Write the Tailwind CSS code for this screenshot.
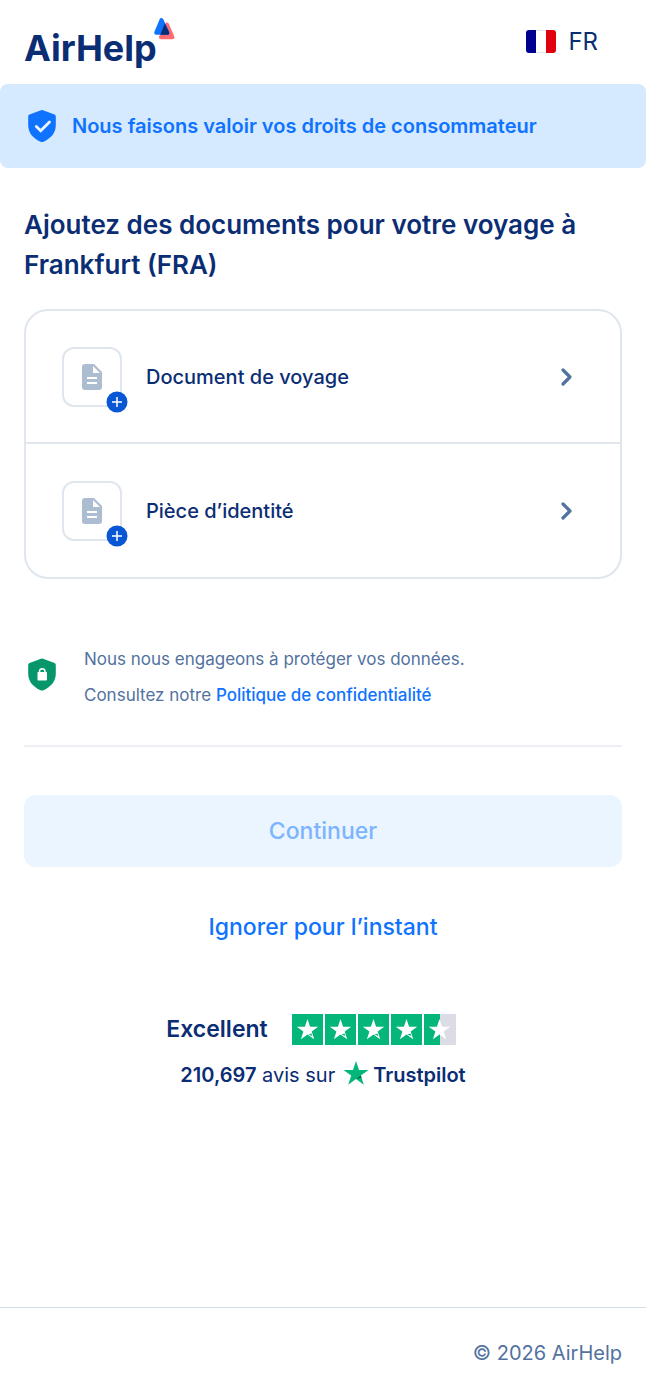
<!DOCTYPE html>
<html lang="fr">
<head>
    <meta charset="UTF-8">
    <meta name="viewport" content="width=device-width, initial-scale=1.0">
    <title>AirHelp - Ajoutez des documents</title>
    <script src="https://cdn.jsdelivr.net/npm/@tailwindcss/browser@4"></script>
</head>
<body class="min-h-screen flex flex-col bg-white text-[#0a2d74] font-['Inter',sans-serif]">
    <header class="h-[84px] pl-6 pr-12 flex items-center justify-between">
        <a href="#" class="flex items-start pt-3" aria-label="AirHelp">
            <span class="text-[36px] leading-[46px] font-bold">AirHelp</span>
            <svg class="w-6 h-6 -ml-1 -mt-2" viewBox="0 0 24 24" aria-hidden="true">
                <path d="M14 7.500l5.500 12.700H8z" fill="#ff6b70" stroke="#ff6b70" stroke-width="4" stroke-linejoin="round"/>
                <path d="M8.500 3l5.900 12.700H3.200z" fill="#0f73ff" stroke="#0f73ff" stroke-width="4" stroke-linejoin="round"/>
                <path d="M11.800 6.500l4.500 9.200q.5 2-1.500 2H7.300z" fill="#0a2d74"/>
            </svg>
        </a>
        <button class="flex items-center gap-3 text-2xl">
            <svg class="w-[30px] h-6" viewBox="0 0 30 24" aria-hidden="true">
                <rect x=".5" y=".5" width="29" height="22" rx="3" fill="#fff" stroke="#e3e8f0"/>
                <path d="M3 0h7v23H3q-3 0-3-3V3q0-3 3-3z" fill="#00008f"/>
                <path d="M20 0h7q3 0 3 3v17q0 3-3 3h-7z" fill="#e1000f"/>
            </svg>
            FR
        </button>
    </header>

    <div class="h-[84px] px-6 flex items-center gap-3 rounded-lg bg-[#d5e9ff] text-[#0f73ff]">
        <svg class="w-9 h-9 shrink-0" viewBox="0 0 36 36" aria-hidden="true">
            <path d="M17 2.300q1-.5 2 0l11.500 4.300q1.300.5 1.300 2V17c0 8-5 13.500-12.300 16.700q-1.500.6-3 0C9.200 30.500 4.200 25 4.200 17V8.600q0-1.500 1.300-2z" fill="#0f73ff"/>
            <path d="M12.300 18.500l4.400 4.200 8.800-8.800" fill="none" stroke="#eaf5ff" stroke-width="2.800" stroke-linecap="round"/>
        </svg>
        <p class="text-xl font-semibold">Nous faisons valoir vos droits de consommateur</p>
    </div>

    <main class="px-6 pt-[37px] flex flex-col">
        <h1 class="text-[26px] leading-10 font-semibold">Ajoutez des documents pour votre voyage à Frankfurt (FRA)</h1>

        <!-- Documents -->
        <div class="mt-6 border-2 border-[#dfe6ee] rounded-3xl divide-y-2 divide-[#dfe6ee]">
            <button class="w-full h-[133px] pl-9 pr-[42px] flex items-center text-left">
                <span class="relative w-[60px] h-[60px] border-2 border-[#dfe6ee] rounded-xl flex items-center justify-center">
                    <svg class="w-8 h-8" viewBox="0 0 32 32" aria-hidden="true">
                        <path d="M8 3h10l8 8v15q0 3-3 3H9q-3 0-3-3V6q0-3 3-3zM17 5v7h7z" fill="#adbdd1" fill-rule="evenodd"/>
                        <path d="M11 17h10M11 22h10" stroke="#fff" stroke-width="2"/>
                    </svg>
                    <svg class="absolute -right-2 -bottom-2 w-[22px] h-[22px]" viewBox="0 0 22 22" aria-hidden="true">
                        <circle cx="11" cy="11" r="10.500" fill="#0a57d6"/>
                        <path d="M11 6v10M6 11h10" stroke="#fff" stroke-width="1.500"/>
                    </svg>
                </span>
                <span class="ml-6 flex-1 text-xl font-medium">Document de voyage</span>
                <svg class="w-6 h-6" viewBox="0 0 24 24" fill="none" stroke="#5272a0" stroke-width="3.200" stroke-linecap="round" stroke-linejoin="round" aria-hidden="true"><path d="M9 5l7 7-7 7"/></svg>
            </button>
            <button class="w-full h-[133px] pl-9 pr-[42px] flex items-center text-left">
                <span class="relative w-[60px] h-[60px] border-2 border-[#dfe6ee] rounded-xl flex items-center justify-center">
                    <svg class="w-8 h-8" viewBox="0 0 32 32" aria-hidden="true">
                        <path d="M8 3h10l8 8v15q0 3-3 3H9q-3 0-3-3V6q0-3 3-3zM17 5v7h7z" fill="#adbdd1" fill-rule="evenodd"/>
                        <path d="M11 17h10M11 22h10" stroke="#fff" stroke-width="2"/>
                    </svg>
                    <svg class="absolute -right-2 -bottom-2 w-[22px] h-[22px]" viewBox="0 0 22 22" aria-hidden="true">
                        <circle cx="11" cy="11" r="10.500" fill="#0a57d6"/>
                        <path d="M11 6v10M6 11h10" stroke="#fff" stroke-width="1.500"/>
                    </svg>
                </span>
                <span class="ml-6 flex-1 text-xl font-medium">Pièce d’identité</span>
                <svg class="w-6 h-6" viewBox="0 0 24 24" fill="none" stroke="#5272a0" stroke-width="3.200" stroke-linecap="round" stroke-linejoin="round" aria-hidden="true"><path d="M9 5l7 7-7 7"/></svg>
            </button>
        </div>

        <!-- Privacy -->
        <div class="mt-[62px] pb-8 flex items-start gap-6 border-b-2 border-[#edf1f5]">
            <svg class="w-9 h-9 mt-4 shrink-0" viewBox="0 0 36 36" aria-hidden="true">
                <path d="M17 1.800q1-.5 2 0l11.500 4.300q1.300.5 1.300 2v8.400c0 8-5 13.500-12.300 16.700q-1.500.6-3 0C9.200 30 4.200 24.500 4.200 16.500V8.100q0-1.500 1.300-2z" fill="#05966b"/>
                <rect x="13.500" y="15" width="9.500" height="8.500" rx=".8" fill="#fff"/>
                <path d="M15.500 16v-1.500a2.700 2.700 0 0 1 5.500 0V16" fill="none" stroke="#fff" stroke-width="1.500"/>
            </svg>
            <div class="text-[17px] leading-9 text-[#5272a0]">
                <p>Nous nous engageons à protéger vos données.</p>
                <p>Consultez notre <a href="#" class="font-medium text-[#0f73ff]">Politique de confidentialité</a></p>
            </div>
        </div>

        <button disabled class="mt-12 h-[72px] rounded-xl bg-[#eaf5ff] text-[#7db4ff] text-[23px] font-medium">Continuer</button>
        <button class="mt-6 h-[72px] text-[#0f73ff] text-[23px] font-medium">Ignorer pour l’instant</button>

        <!-- Trustpilot -->
        <div class="mt-[50px] pr-6 flex items-center justify-center gap-6">
            <span class="text-[23px] leading-8 font-semibold">Excellent</span>
            <svg class="w-[164px] h-[31px]" viewBox="0 0 164 31" role="img" aria-label="4,5 étoiles sur 5">
                <defs>
                    <path id="star" d="M15.500 5l2.600 7.700h8.100l-6.500 4.800 2.500 7.700-6.700-4.700-6.600 4.700 2.500-7.700-6.600-4.800h8.100z"/>
                </defs>
                <path d="M0 0h31v31H0zM33 0h31v31H33zM66 0h31v31H66zM99 0h31v31H99zM132 0h16v31h-16z" fill="#04b67a"/>
                <path d="M148 0h16v31h-16z" fill="#dcdce6"/>
                <g fill="#fff">
                    <use href="#star"/>
                    <use href="#star" x="33"/>
                    <use href="#star" x="66"/>
                    <use href="#star" x="99"/>
                    <use href="#star" x="132"/>
                </g>
                <path d="M16.500 20.500l3-1 .8 2.600zM49.500 20.500l3-1 .8 2.600zM82.500 20.500l3-1 .8 2.600zM115.500 20.500l3-1 .8 2.600z" fill="#04b67a"/>
            </svg>
        </div>
        <div class="mt-[14px] flex items-center justify-center text-xl leading-8">
            <span><b class="font-semibold">210,697</b> avis sur</span>
            <svg class="ml-2 mr-1 -mt-1 w-[26px] h-[26px]" viewBox="0 0 26 26" aria-hidden="true">
                <path d="M13 1l3 9h9.500l-7.700 5.600 3 9.200L13 19l-7.800 5.800 3-9.200L.5 10H10z" fill="#04b67a"/>
                <path d="M18.500 17.500l-.7-1.900L13 19z" fill="#0a5a44"/>
            </svg>
            <b class="font-semibold">Trustpilot</b>
        </div>
    </main>

    <footer class="mt-auto h-[93px] pb-[2px] px-6 flex items-center justify-end border-t border-[#cddfea] text-[#5272a0] text-xl">
        © 2026 AirHelp
    </footer>
</body>
</html>
